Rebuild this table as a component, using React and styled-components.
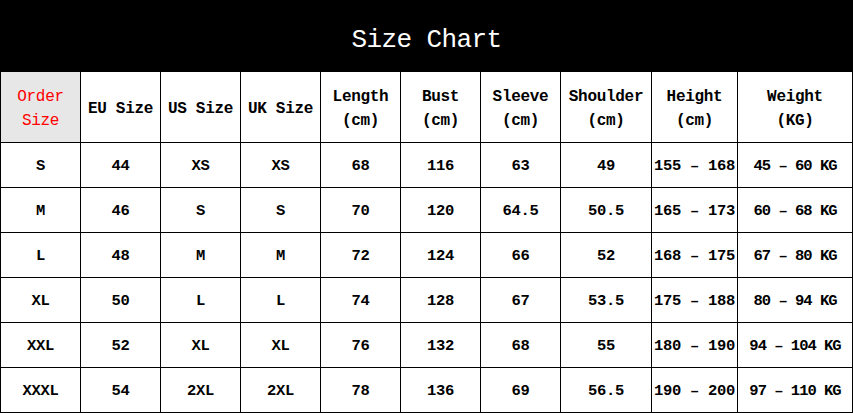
import styled, { createGlobalStyle } from 'styled-components';

const GlobalStyle = createGlobalStyle`
  html, body {
    margin: 0;
    padding: 0;
    background: #fff;
  }
`;

const Page = styled.div`
  width: 853px;
  height: 413px;
  overflow: hidden;
  font-family: "Liberation Mono", "DejaVu Sans Mono", monospace;
  color: #000;
`;

const Banner = styled.div`
  height: 72px;
  background: #000;
  color: #fff;
  display: flex;
  align-items: center;
  justify-content: center;
  font-size: 26px;
  letter-spacing: -0.6px;
  padding-top: 7px;
  box-sizing: border-box;
`;

const Table = styled.table`
  width: 852px;
  border-collapse: collapse;
  table-layout: fixed;
`;

const HeadCell = styled.th`
  height: 70px;
  border: 1px solid #000;
  border-top: none;
  padding: 4px 0 0;
  box-sizing: border-box;
  font-size: 16px;
  line-height: 24px;
  text-align: center;
  white-space: pre;
  letter-spacing: -0.3px;
  background: ${(p) => (p.$accent ? '#e7e7e7' : '#fff')};
  color: ${(p) => (p.$accent ? '#ff0000' : '#000')};
  font-weight: ${(p) => (p.$accent ? 'normal' : 'bold')};
`;

const Cell = styled.td`
  height: 45px;
  border: 1px solid #000;
  padding: 3px 0 0;
  box-sizing: border-box;
  font-size: 15.5px;
  font-weight: bold;
  text-align: center;
  white-space: pre;
  letter-spacing: ${(p) => (p.$tight ? '-1px' : '-0.3px')};
`;

const widths = [80, 80, 80, 80, 80, 80, 80, 91, 86, 115];

const headers = [
  'Order\nSize',
  'EU Size',
  'US Size',
  'UK Size',
  'Length\n(cm)',
  'Bust\n(cm)',
  'Sleeve\n(cm)',
  'Shoulder\n(cm)',
  'Height\n(cm)',
  'Weight\n(KG)',
];

const rows = [
  ['S', '44', 'XS', 'XS', '68', '116', '63', '49', '155 – 168', '45 – 60 KG'],
  ['M', '46', 'S', 'S', '70', '120', '64.5', '50.5', '165 – 173', '60 – 68 KG'],
  ['L', '48', 'M', 'M', '72', '124', '66', '52', '168 – 175', '67 – 80 KG'],
  ['XL', '50', 'L', 'L', '74', '128', '67', '53.5', '175 – 188', '80 – 94 KG'],
  ['XXL', '52', 'XL', 'XL', '76', '132', '68', '55', '180 – 190', '94 – 104 KG'],
  ['XXXL', '54', '2XL', '2XL', '78', '136', '69', '56.5', '190 – 200', '97 – 110 KG'],
];

export default function App() {
  return (
    <Page>
      <GlobalStyle />
      <Banner>Size Chart</Banner>
      <Table>
        <colgroup>
          {widths.map((w, i) => (
            <col key={i} style={{ width: w }} />
          ))}
        </colgroup>
        <thead>
          <tr>
            {headers.map((h, i) => (
              <HeadCell key={h} $accent={i === 0}>
                {h}
              </HeadCell>
            ))}
          </tr>
        </thead>
        <tbody>
          {rows.map((r) => (
            <tr key={r[0]}>
              {r.map((v, i) => (
                <Cell key={i} $tight={i === 9}>
                  {v}
                </Cell>
              ))}
            </tr>
          ))}
        </tbody>
      </Table>
    </Page>
  );
}
